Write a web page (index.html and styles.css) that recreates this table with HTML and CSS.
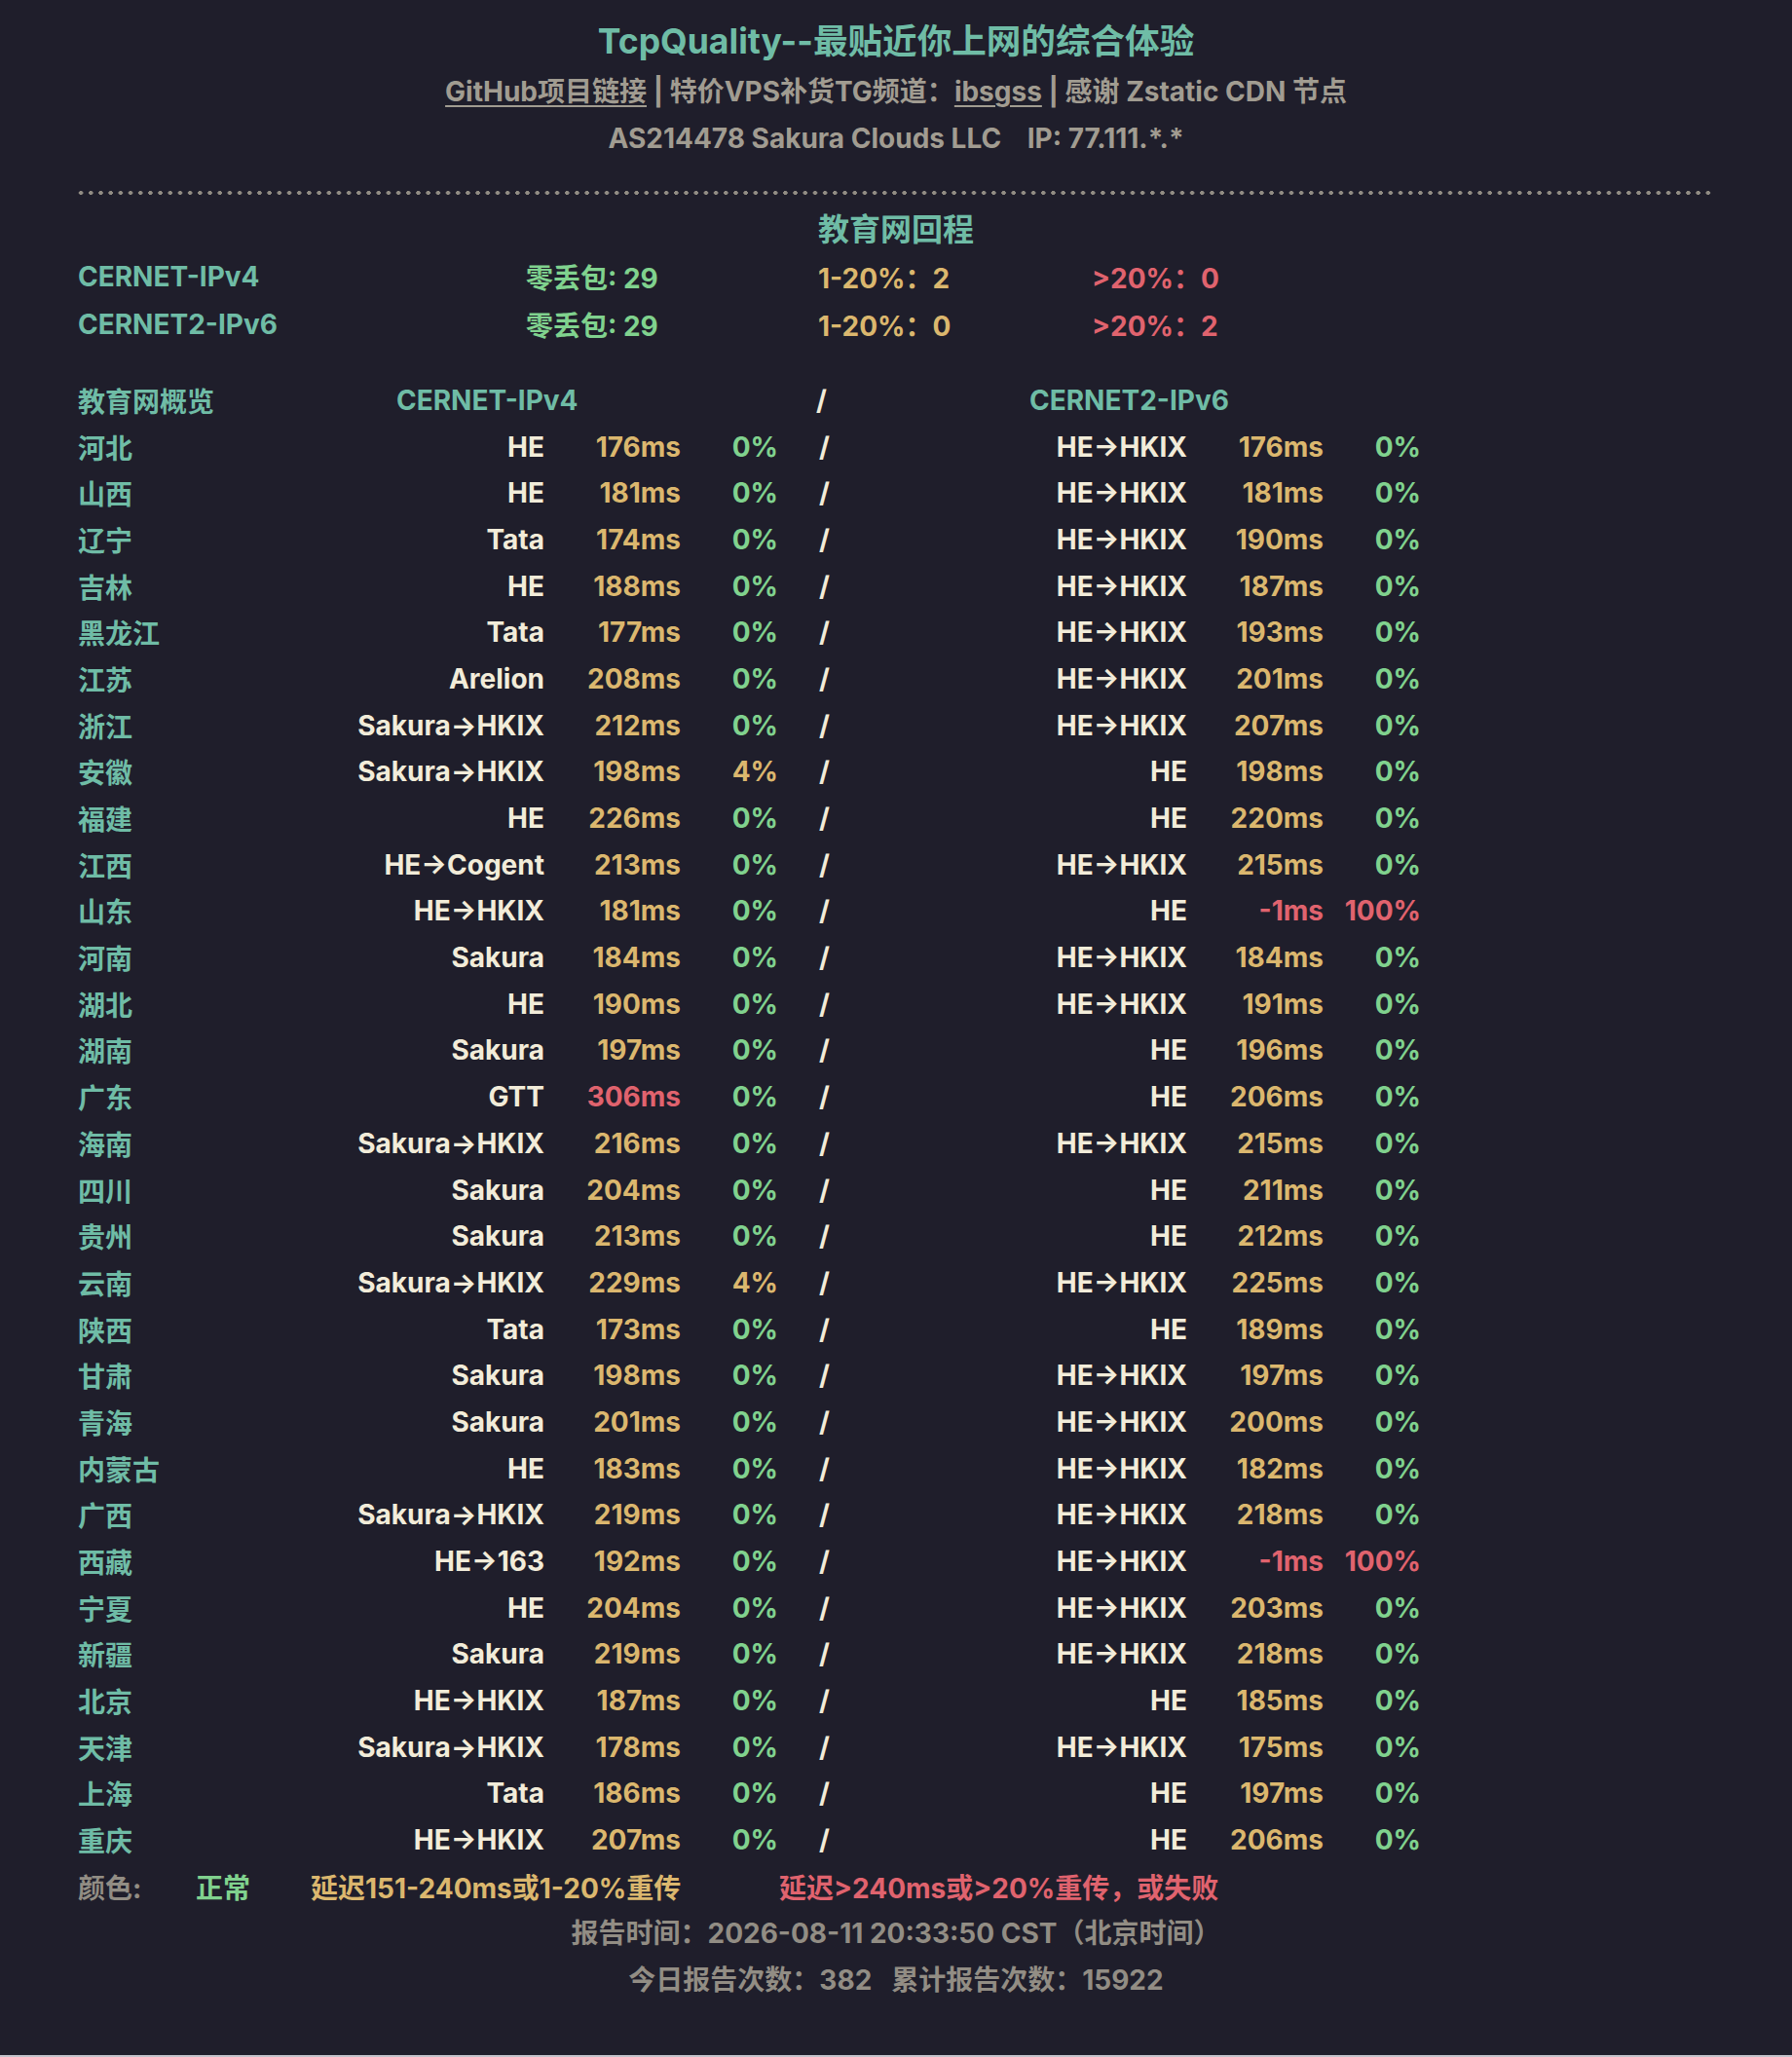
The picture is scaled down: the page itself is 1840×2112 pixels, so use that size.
FILE: index.html
```html
<!DOCTYPE html>
<html lang="zh-CN">
<head>
<meta charset="utf-8">
<title>TcpQuality</title>
<link rel="stylesheet" href="styles.css">
</head>
<body>
<div class="page">
  <header class="head">
    <h1 class="title">TcpQuality--最贴近你上网的综合体验</h1>
    <p class="sub"><a class="lnk">GitHub项目链接</a> | 特价VPS补货TG频道：<a class="lnk">ibsgss</a> | 感谢 Zstatic CDN 节点</p>
    <p class="sub">AS214478 Sakura Clouds LLC&nbsp;&nbsp;&nbsp;&nbsp;IP: 77.111.*.*</p>
  </header>
  <div class="dots"></div>
  <h2 class="section">教育网回程</h2>
  <div class="summary">
    <span class="teal">CERNET-IPv4</span><span class="green">零丢包: 29</span><span class="yellow">1-20%：2</span><span class="red">&gt;20%：0</span>
    <span class="teal">CERNET2-IPv6</span><span class="green">零丢包: 29</span><span class="yellow">1-20%：0</span><span class="red">&gt;20%：2</span>
  </div>
  <div class="grid">
    <div class="row hdr"><span class="name">教育网概览</span><span class="h4">CERNET-IPv4</span><span class="slash hs">/</span><span class="h6">CERNET2-IPv6</span></div>
    <div class="row"><span class="name">河北</span><span class="isp">HE</span><span class="lat y">176ms</span><span class="loss g">0%</span><span class="slash">/</span><span class="isp">HE→HKIX</span><span class="lat y">176ms</span><span class="loss g">0%</span></div>
    <div class="row"><span class="name">山西</span><span class="isp">HE</span><span class="lat y">181ms</span><span class="loss g">0%</span><span class="slash">/</span><span class="isp">HE→HKIX</span><span class="lat y">181ms</span><span class="loss g">0%</span></div>
    <div class="row"><span class="name">辽宁</span><span class="isp">Tata</span><span class="lat y">174ms</span><span class="loss g">0%</span><span class="slash">/</span><span class="isp">HE→HKIX</span><span class="lat y">190ms</span><span class="loss g">0%</span></div>
    <div class="row"><span class="name">吉林</span><span class="isp">HE</span><span class="lat y">188ms</span><span class="loss g">0%</span><span class="slash">/</span><span class="isp">HE→HKIX</span><span class="lat y">187ms</span><span class="loss g">0%</span></div>
    <div class="row"><span class="name">黑龙江</span><span class="isp">Tata</span><span class="lat y">177ms</span><span class="loss g">0%</span><span class="slash">/</span><span class="isp">HE→HKIX</span><span class="lat y">193ms</span><span class="loss g">0%</span></div>
    <div class="row"><span class="name">江苏</span><span class="isp">Arelion</span><span class="lat y">208ms</span><span class="loss g">0%</span><span class="slash">/</span><span class="isp">HE→HKIX</span><span class="lat y">201ms</span><span class="loss g">0%</span></div>
    <div class="row"><span class="name">浙江</span><span class="isp">Sakura→HKIX</span><span class="lat y">212ms</span><span class="loss g">0%</span><span class="slash">/</span><span class="isp">HE→HKIX</span><span class="lat y">207ms</span><span class="loss g">0%</span></div>
    <div class="row"><span class="name">安徽</span><span class="isp">Sakura→HKIX</span><span class="lat y">198ms</span><span class="loss y">4%</span><span class="slash">/</span><span class="isp">HE</span><span class="lat y">198ms</span><span class="loss g">0%</span></div>
    <div class="row"><span class="name">福建</span><span class="isp">HE</span><span class="lat y">226ms</span><span class="loss g">0%</span><span class="slash">/</span><span class="isp">HE</span><span class="lat y">220ms</span><span class="loss g">0%</span></div>
    <div class="row"><span class="name">江西</span><span class="isp">HE→Cogent</span><span class="lat y">213ms</span><span class="loss g">0%</span><span class="slash">/</span><span class="isp">HE→HKIX</span><span class="lat y">215ms</span><span class="loss g">0%</span></div>
    <div class="row"><span class="name">山东</span><span class="isp">HE→HKIX</span><span class="lat y">181ms</span><span class="loss g">0%</span><span class="slash">/</span><span class="isp">HE</span><span class="lat r">-1ms</span><span class="loss r">100%</span></div>
    <div class="row"><span class="name">河南</span><span class="isp">Sakura</span><span class="lat y">184ms</span><span class="loss g">0%</span><span class="slash">/</span><span class="isp">HE→HKIX</span><span class="lat y">184ms</span><span class="loss g">0%</span></div>
    <div class="row"><span class="name">湖北</span><span class="isp">HE</span><span class="lat y">190ms</span><span class="loss g">0%</span><span class="slash">/</span><span class="isp">HE→HKIX</span><span class="lat y">191ms</span><span class="loss g">0%</span></div>
    <div class="row"><span class="name">湖南</span><span class="isp">Sakura</span><span class="lat y">197ms</span><span class="loss g">0%</span><span class="slash">/</span><span class="isp">HE</span><span class="lat y">196ms</span><span class="loss g">0%</span></div>
    <div class="row"><span class="name">广东</span><span class="isp">GTT</span><span class="lat r">306ms</span><span class="loss g">0%</span><span class="slash">/</span><span class="isp">HE</span><span class="lat y">206ms</span><span class="loss g">0%</span></div>
    <div class="row"><span class="name">海南</span><span class="isp">Sakura→HKIX</span><span class="lat y">216ms</span><span class="loss g">0%</span><span class="slash">/</span><span class="isp">HE→HKIX</span><span class="lat y">215ms</span><span class="loss g">0%</span></div>
    <div class="row"><span class="name">四川</span><span class="isp">Sakura</span><span class="lat y">204ms</span><span class="loss g">0%</span><span class="slash">/</span><span class="isp">HE</span><span class="lat y">211ms</span><span class="loss g">0%</span></div>
    <div class="row"><span class="name">贵州</span><span class="isp">Sakura</span><span class="lat y">213ms</span><span class="loss g">0%</span><span class="slash">/</span><span class="isp">HE</span><span class="lat y">212ms</span><span class="loss g">0%</span></div>
    <div class="row"><span class="name">云南</span><span class="isp">Sakura→HKIX</span><span class="lat y">229ms</span><span class="loss y">4%</span><span class="slash">/</span><span class="isp">HE→HKIX</span><span class="lat y">225ms</span><span class="loss g">0%</span></div>
    <div class="row"><span class="name">陕西</span><span class="isp">Tata</span><span class="lat y">173ms</span><span class="loss g">0%</span><span class="slash">/</span><span class="isp">HE</span><span class="lat y">189ms</span><span class="loss g">0%</span></div>
    <div class="row"><span class="name">甘肃</span><span class="isp">Sakura</span><span class="lat y">198ms</span><span class="loss g">0%</span><span class="slash">/</span><span class="isp">HE→HKIX</span><span class="lat y">197ms</span><span class="loss g">0%</span></div>
    <div class="row"><span class="name">青海</span><span class="isp">Sakura</span><span class="lat y">201ms</span><span class="loss g">0%</span><span class="slash">/</span><span class="isp">HE→HKIX</span><span class="lat y">200ms</span><span class="loss g">0%</span></div>
    <div class="row"><span class="name">内蒙古</span><span class="isp">HE</span><span class="lat y">183ms</span><span class="loss g">0%</span><span class="slash">/</span><span class="isp">HE→HKIX</span><span class="lat y">182ms</span><span class="loss g">0%</span></div>
    <div class="row"><span class="name">广西</span><span class="isp">Sakura→HKIX</span><span class="lat y">219ms</span><span class="loss g">0%</span><span class="slash">/</span><span class="isp">HE→HKIX</span><span class="lat y">218ms</span><span class="loss g">0%</span></div>
    <div class="row"><span class="name">西藏</span><span class="isp">HE→163</span><span class="lat y">192ms</span><span class="loss g">0%</span><span class="slash">/</span><span class="isp">HE→HKIX</span><span class="lat r">-1ms</span><span class="loss r">100%</span></div>
    <div class="row"><span class="name">宁夏</span><span class="isp">HE</span><span class="lat y">204ms</span><span class="loss g">0%</span><span class="slash">/</span><span class="isp">HE→HKIX</span><span class="lat y">203ms</span><span class="loss g">0%</span></div>
    <div class="row"><span class="name">新疆</span><span class="isp">Sakura</span><span class="lat y">219ms</span><span class="loss g">0%</span><span class="slash">/</span><span class="isp">HE→HKIX</span><span class="lat y">218ms</span><span class="loss g">0%</span></div>
    <div class="row"><span class="name">北京</span><span class="isp">HE→HKIX</span><span class="lat y">187ms</span><span class="loss g">0%</span><span class="slash">/</span><span class="isp">HE</span><span class="lat y">185ms</span><span class="loss g">0%</span></div>
    <div class="row"><span class="name">天津</span><span class="isp">Sakura→HKIX</span><span class="lat y">178ms</span><span class="loss g">0%</span><span class="slash">/</span><span class="isp">HE→HKIX</span><span class="lat y">175ms</span><span class="loss g">0%</span></div>
    <div class="row"><span class="name">上海</span><span class="isp">Tata</span><span class="lat y">186ms</span><span class="loss g">0%</span><span class="slash">/</span><span class="isp">HE</span><span class="lat y">197ms</span><span class="loss g">0%</span></div>
    <div class="row"><span class="name">重庆</span><span class="isp">HE→HKIX</span><span class="lat y">207ms</span><span class="loss g">0%</span><span class="slash">/</span><span class="isp">HE</span><span class="lat y">206ms</span><span class="loss g">0%</span></div>
  </div>
  <div class="legend">
    <span class="muted">颜色:</span><span class="green">正常</span><span class="yellow">延迟151-240ms或1-20%重传</span><span class="red">延迟&gt;240ms或&gt;20%重传，或失败</span>
  </div>
  <p class="foot">报告时间：2026-08-11 20:33:50 CST（北京时间）</p>
  <p class="foot">今日报告次数：382&nbsp;&nbsp;&nbsp;累计报告次数：15922</p>
</div>
</body>
</html>
```

FILE: styles.css
```css
html {
  background: #c4c3cb;
}
body {
  margin: 0;
  font-family: "Inter", "Noto Sans CJK SC", sans-serif;
  font-weight: 700;
  font-size: 28px;
  color: #f2ecd9;
}
.page {
  background: #1f1e2b;
  height: 2110px;
  padding: 16px 80px 0;
  box-sizing: border-box;
}
.head {
  text-align: center;
}
.title {
  margin: 0;
  font-size: 35.6px;
  line-height: 54px;
  font-weight: 700;
  color: #6fbca6;
}
.sub {
  margin: 0;
  line-height: 48px;
  color: #a19c91;
}
.lnk {
  color: #a19c91;
  text-decoration: underline;
  text-underline-offset: 4px;
  text-decoration-thickness: 2px;
}
.dots {
  margin-top: 30px;
  margin-left: -2px;
  height: 4px;
  background-image: radial-gradient(circle, #928d84 1.9px, transparent 2.2px);
  background-size: 10.2px 4px;
  background-repeat: repeat-x;
}
.section {
  margin: 12px 0 0;
  text-align: center;
  font-size: 32px;
  line-height: 48px;
  font-weight: 700;
  color: #6fbca6;
}
.summary {
  display: grid;
  grid-template-columns: 460px 300px 281px 1fr;
  grid-auto-rows: 48.5px;
  align-items: center;
}
.teal { color: #6fbca6; }
.green { color: #80d28e; }
.yellow { color: #dbb76e; }
.red { color: #e0636e; }
.muted { color: #928d84; }

.grid {
  margin-top: 30px;
}
.row {
  display: grid;
  grid-template-columns: 200px 279px 140px 100px 100px 320px 140px 100px;
  height: 47.7px;
  align-items: center;
  white-space: nowrap;
}
.name { color: #6fbca6; }
.isp, .lat, .loss { text-align: right; }
.slash { padding-left: 42px; }
.hdr .h4 {
  grid-column: 2 / 5;
  padding-left: 127px;
  color: #6fbca6;
}
.hdr .hs { padding-left: 39px; }
.hdr .h6 {
  grid-column: 6 / 9;
  padding-left: 158px;
  color: #6fbca6;
}
.y { color: #dbb76e; }
.g { color: #80d28e; }
.r { color: #e0636e; }

.legend {
  display: grid;
  grid-template-columns: 121px 118px 481px 1fr;
  height: 47.7px;
  align-items: center;
}
.foot {
  margin: 0;
  text-align: center;
  line-height: 48px;
  color: #928d84;
}
```
